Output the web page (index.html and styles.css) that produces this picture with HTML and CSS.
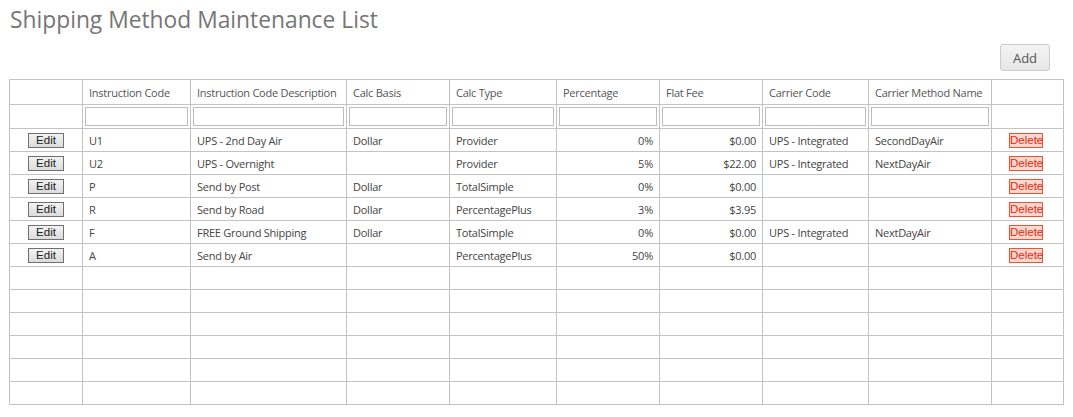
FILE: index.html
```html
<!DOCTYPE html>
<html>
<head>
<meta charset="utf-8">
<link rel="stylesheet" href="styles.css">
</head>
<body>
<h1 class="title">Shipping Method Maintenance List</h1>
<div class="toolbar"><button class="add-btn">Add</button></div>
<table class="grid">
  <colgroup>
    <col style="width:73px"><col style="width:108px"><col style="width:156px"><col style="width:103px"><col style="width:107px"><col style="width:103px"><col style="width:103px"><col style="width:106px"><col style="width:123px"><col style="width:72px">
  </colgroup>
  <thead>
    <tr class="head">
      <th></th><th>Instruction Code</th><th>Instruction Code Description</th><th>Calc Basis</th><th>Calc Type</th><th>Percentage</th><th>Flat Fee</th><th>Carrier Code</th><th>Carrier Method Name</th><th></th>
    </tr>
    <tr class="filter">
      <td></td><td><input class="fin"></td><td><input class="fin"></td><td><input class="fin"></td><td><input class="fin"></td><td><input class="fin"></td><td><input class="fin"></td><td><input class="fin"></td><td><input class="fin"></td><td></td>
    </tr>
  </thead>
  <tbody>
    <tr><td class="c"><button class="edit">Edit</button></td><td>U1</td><td>UPS - 2nd Day Air</td><td>Dollar</td><td>Provider</td><td class="r">0%</td><td class="r">$0.00</td><td>UPS - Integrated</td><td>SecondDayAir</td><td class="c"><button class="del">Delete</button></td></tr>
    <tr><td class="c"><button class="edit">Edit</button></td><td>U2</td><td>UPS - Overnight</td><td></td><td>Provider</td><td class="r">5%</td><td class="r">$22.00</td><td>UPS - Integrated</td><td>NextDayAir</td><td class="c"><button class="del">Delete</button></td></tr>
    <tr><td class="c"><button class="edit">Edit</button></td><td>P</td><td>Send by Post</td><td>Dollar</td><td>TotalSimple</td><td class="r">0%</td><td class="r">$0.00</td><td></td><td></td><td class="c"><button class="del">Delete</button></td></tr>
    <tr><td class="c"><button class="edit">Edit</button></td><td>R</td><td>Send by Road</td><td>Dollar</td><td>PercentagePlus</td><td class="r">3%</td><td class="r">$3.95</td><td></td><td></td><td class="c"><button class="del">Delete</button></td></tr>
    <tr><td class="c"><button class="edit">Edit</button></td><td>F</td><td>FREE Ground Shipping</td><td>Dollar</td><td>TotalSimple</td><td class="r">0%</td><td class="r">$0.00</td><td>UPS - Integrated</td><td>NextDayAir</td><td class="c"><button class="del">Delete</button></td></tr>
    <tr><td class="c"><button class="edit">Edit</button></td><td>A</td><td>Send by Air</td><td></td><td>PercentagePlus</td><td class="r">50%</td><td class="r">$0.00</td><td></td><td></td><td class="c"><button class="del">Delete</button></td></tr>
    <tr class="empty"><td></td><td></td><td></td><td></td><td></td><td></td><td></td><td></td><td></td><td></td></tr>
    <tr class="empty"><td></td><td></td><td></td><td></td><td></td><td></td><td></td><td></td><td></td><td></td></tr>
    <tr class="empty"><td></td><td></td><td></td><td></td><td></td><td></td><td></td><td></td><td></td><td></td></tr>
    <tr class="empty"><td></td><td></td><td></td><td></td><td></td><td></td><td></td><td></td><td></td><td></td></tr>
    <tr class="empty"><td></td><td></td><td></td><td></td><td></td><td></td><td></td><td></td><td></td><td></td></tr>
    <tr class="empty"><td></td><td></td><td></td><td></td><td></td><td></td><td></td><td></td><td></td><td></td></tr>
  </tbody>
</table>
</body>
</html>
```
FILE: styles.css
```css
html, body {
  margin: 0;
  padding: 0;
  background: #fff;
}
body {
  padding: 0 9px;
  font-family: "Open Sans", "Noto Sans", sans-serif;
  color: #444;
}
.title {
  margin: 0;
  padding: 5px 0 0 1px;
  font-size: 22.8px;
  font-weight: 400;
  color: #767676;
  line-height: 30px;
  height: 39px;
}
.toolbar {
  display: flex;
  justify-content: flex-end;
  padding-right: 14px;
  height: 35px;
}
.add-btn {
  width: 50px;
  height: 27px;
  border: 1px solid #ccc;
  border-radius: 3px;
  background: linear-gradient(#f4f4f4, #e6e6e6);
  color: #555;
  font-family: "Open Sans", sans-serif;
  font-size: 13px;
  padding: 0;
}
.grid {
  border-collapse: collapse;
  table-layout: fixed;
  width: 1055px;
  font-size: 11px;
  letter-spacing: -0.25px;
}
.grid th, .grid td {
  border: 1px solid #c3c3c3;
  padding: 0 6px;
  text-align: left;
  font-weight: 400;
  white-space: nowrap;
  overflow: hidden;
}
.grid th {
  color: #555;
}
.head { height: 25px; }
.filter { height: 24px; }
.filter td { padding: 0 2px; }
.grid tbody tr { height: 23px; }
.fin {
  display: block;
  box-sizing: border-box;
  width: 100%;
  height: 19px;
  border: 1px solid #bcbcbc;
  margin: 0;
  padding: 0;
  background: #fff;
}
.grid td.c { text-align: center; padding: 0; letter-spacing: 0; }
.grid td.r { text-align: right; }
.edit {
  font-family: "Liberation Sans", Arial, sans-serif;
  font-size: 11.5px;
  width: 36px;
  height: 15px;
  padding: 0;
  line-height: 12px;
  border: 1px solid #707070;
  background: linear-gradient(#f2f2f2, #dcdcdc);
  color: #222;
  border-radius: 0;
  margin-left: 0;
}
.del {
  font-family: "Liberation Sans", Arial, sans-serif;
  font-size: 11.5px;
  width: 34px;
  height: 15px;
  padding: 0;
  line-height: 12px;
  border: 1px solid #f4512f;
  background: #fdd8d0;
  color: #e8280c;
  border-radius: 0;
  margin-left: -3px;
}
```
